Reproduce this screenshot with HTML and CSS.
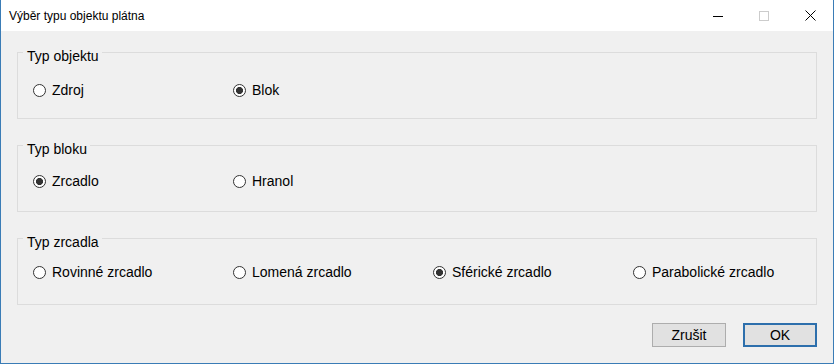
FILE: index.html
```html
<!DOCTYPE html>
<html lang="cs">
<head>
  <meta charset="UTF-8">
  <meta name="viewport" content="width=device-width, initial-scale=1.0">
  <title>Výběr typu objektu plátna</title>
  <link rel="stylesheet" href="styles.css">
</head>
<body>
  <div class="window">
    <div class="titlebar">
      <span class="title">Výběr typu objektu plátna</span>
      <div class="caption-buttons">
        <span class="caption-btn">
          <svg width="10" height="10" viewBox="0 0 10 10"><path d="M0 5.5h10" stroke="#000" stroke-width="1"/></svg>
        </span>
        <span class="caption-btn disabled">
          <svg width="10" height="10" viewBox="0 0 10 10"><rect x="0.5" y="0.5" width="9" height="9" fill="none" stroke="#ccc" stroke-width="1"/></svg>
        </span>
        <span class="caption-btn">
          <svg width="11" height="11" viewBox="0 0 11 11"><path d="M0.5 0.5l10 10M10.5 0.5l-10 10" stroke="#000" stroke-width="1"/></svg>
        </span>
      </div>
    </div>

    <div class="content">
      <div class="group group-object">
        <span class="group-title">Typ objektu</span>
        <div class="options">
          <label class="option"><input type="radio" name="objekt"> Zdroj</label>
          <label class="option"><input type="radio" name="objekt" checked> Blok</label>
        </div>
      </div>

      <div class="group group-block">
        <span class="group-title">Typ bloku</span>
        <div class="options">
          <label class="option"><input type="radio" name="blok" checked> Zrcadlo</label>
          <label class="option"><input type="radio" name="blok"> Hranol</label>
        </div>
      </div>

      <div class="group group-mirror">
        <span class="group-title">Typ zrcadla</span>
        <div class="options">
          <label class="option"><input type="radio" name="zrcadlo"> Rovinné zrcadlo</label>
          <label class="option"><input type="radio" name="zrcadlo"> Lomená zrcadlo</label>
          <label class="option"><input type="radio" name="zrcadlo" checked> Sférické zrcadlo</label>
          <label class="option"><input type="radio" name="zrcadlo"> Parabolické zrcadlo</label>
        </div>
      </div>

      <div class="actions">
        <button class="btn">Zrušit</button>
        <button class="btn btn-default">OK</button>
      </div>
    </div>
  </div>
</body>
</html>
```

FILE: styles.css
```css
body {
  margin: 0;
  padding: 0;
  font-family: "Liberation Sans", Arial, sans-serif;
  font-size: 14px;
  color: #000;
  background-color: #f0f0f0;
}

.window {
  width: 834px;
  height: 364px;
  box-sizing: border-box;
  border: 1px solid #3a7cb6;
  border-top: none;
  background-color: #f0f0f0;
}

.titlebar {
  height: 31px;
  display: flex;
  align-items: center;
  justify-content: space-between;
  background-color: #fff;
}

.title {
  font-size: 12px;
  padding-left: 8px;
  padding-top: 1px;
}

.caption-buttons {
  display: flex;
  height: 100%;
}

.caption-btn {
  width: 46px;
  height: 100%;
  display: flex;
  align-items: center;
  justify-content: center;
}

.content {
  padding: 21px 16px 0 16px;
}

.group {
  height: 67px;
  box-sizing: border-box;
  border: 1px solid #dcdcdc;
  margin-bottom: 26px;
  line-height: 16px;
}

.group-mirror {
  margin-bottom: 18px;
}

.group-title {
  display: block;
  width: max-content;
  margin: -5px 0 0 5px;
  padding: 0 3px 0 4px;
  line-height: 16px;
  background-color: #f0f0f0;
}

.options {
  display: flex;
  padding-left: 15px;
  margin-top: 18px;
  line-height: 16px;
}

.group-block .options {
  margin-top: 16px;
}

.group-mirror .options {
  margin-top: 14px;
}

.option {
  width: 200px;
  flex-shrink: 0;
  display: flex;
  align-items: center;
  gap: 6px;
}

.option input {
  appearance: none;
  -webkit-appearance: none;
  width: 13px;
  height: 13px;
  margin: 0;
  border: 1px solid #333;
  border-radius: 50%;
  background-color: #fff;
}

.option input:checked {
  background: radial-gradient(circle, #333 0 3.3px, #fff 3.8px);
}

.actions {
  display: flex;
  justify-content: flex-end;
  gap: 17px;
}

.btn {
  width: 74px;
  height: 24px;
  font-family: "Liberation Sans", Arial, sans-serif;
  font-size: 14px;
  color: #000;
  background-color: #e1e1e1;
  border: 1px solid #adadad;
  padding: 0;
}

.btn-default {
  border: 2px solid #2d6fac;
}
```
